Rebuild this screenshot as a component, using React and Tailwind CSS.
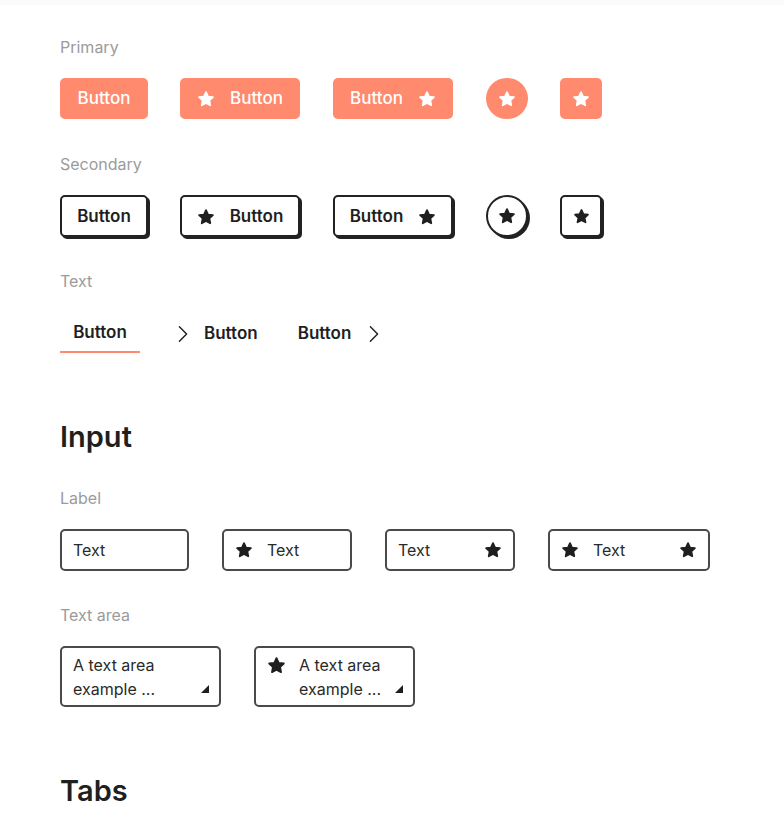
import React from "react";

const Star = ({ className = "" }) => (
  <svg viewBox="0 0 24 24" className={className} fill="currentColor" stroke="currentColor" strokeWidth="2.4" strokeLinejoin="round">
    <path d="M12 2.8l2.75 5.9 6.45.78-4.75 4.43 1.22 6.39L12 17.14l-5.67 3.16 1.22-6.39L2.8 9.48l6.45-.78z" />
  </svg>
);

const Chevron = () => (
  <svg viewBox="0 0 12 20" className="w-[12px] h-[18px]" fill="none" stroke="currentColor" strokeWidth="1.6" strokeLinecap="round" strokeLinejoin="round">
    <path d="M2 2l8 8-8 8" />
  </svg>
);

const Label = ({ children }) => <div className="text-[16px] leading-[20px] text-[#9b9b9b] mb-[21px]">{children}</div>;

const Heading = ({ children }) => <h2 className="text-[29px] leading-[38px] font-semibold text-[#1f1f1f] mb-[32px]">{children}</h2>;

const primary = "h-[41px] pt-px bg-[#ff8a6d] text-white rounded-[5px] flex items-center justify-center gap-[15px] text-[17px] font-medium";
const secondary = "h-[42px] pt-px bg-white text-[#1f1f1f] border-2 border-[#222] rounded-[5px] shadow-[2px_2px_0_#222] flex items-center justify-center gap-[15px] text-[17px] font-semibold";
const input = "h-[42px] border-2 border-[#4a4a4a] rounded-[5px] flex items-center px-[11px] text-[16px] text-[#2a2a2a]";

export default function App() {
  return (
    <div className="min-h-[838px] bg-white border-t-[5px] border-[#fbfbfb] pl-[60px] pt-[32px]" style={{ fontFamily: "Inter, 'Noto Sans', sans-serif" }}>
      <Label>Primary</Label>
      <div className="flex gap-[32px] mb-[35px]">
        <button className={`${primary} w-[88px]`}>Button</button>
        <button className={`${primary} w-[120px]`}><Star className="w-[18px] h-[18px]" />Button</button>
        <button className={`${primary} w-[120px] ml-px`}>Button<Star className="w-[18px] h-[18px]" /></button>
        <button className={`${primary} w-[42px] !pt-0 !rounded-full ml-px`}><Star className="w-[18px] h-[18px]" /></button>
        <button className={`${primary} w-[42px] !pt-0`}><Star className="w-[18px] h-[18px]" /></button>
      </div>

      <Label>Secondary</Label>
      <div className="flex gap-[32px] mb-[34px]">
        <button className={`${secondary} w-[88px]`}>Button</button>
        <button className={`${secondary} w-[120px]`}><Star className="w-[18px] h-[18px]" />Button</button>
        <button className={`${secondary} w-[120px] ml-px`}>Button<Star className="w-[18px] h-[18px]" /></button>
        <button className={`${secondary} w-[42px] !pt-0 !rounded-full ml-px`}><Star className="w-[18px] h-[18px]" /></button>
        <button className={`${secondary} w-[42px] !pt-0`}><Star className="w-[17px] h-[17px]" /></button>
      </div>

      <Label>Text</Label>
      <div className="flex items-center h-[41px] mb-[65px] text-[17px] font-semibold text-[#1f1f1f]">
        <button className="h-full pt-[3px] px-[10px] border-b-2 border-[#ff8a6d] flex items-center w-[80px] justify-center">Button</button>
        <button className="flex items-center gap-[15px] ml-[37px] pt-[2px]"><Chevron />Button</button>
        <button className="flex items-center gap-[17px] ml-[40px] pt-[2px]">Button<Chevron /></button>
      </div>

      <Heading>Input</Heading>
      <Label>Label</Label>
      <div className="flex gap-[33px] mb-[34px]">
        <div className={`${input} w-[129px]`}>Text</div>
        <div className={`${input} w-[130px] gap-[14px]`}><Star className="w-[18px] h-[18px] text-[#1f1f1f]" />Text</div>
        <div className={`${input} w-[130px] justify-between`}>Text<Star className="w-[18px] h-[18px] text-[#1f1f1f]" /></div>
        <div className={`${input} w-[162px] gap-[14px]`}><Star className="w-[18px] h-[18px] text-[#1f1f1f]" /><span className="flex-1">Text</span><Star className="w-[18px] h-[18px] text-[#1f1f1f]" /></div>
      </div>

      <Label>Text area</Label>
      <div className="flex gap-[33px] mb-[65px]">
        <div className="relative w-[161px] h-[61px] border-2 border-[#4a4a4a] rounded-[5px] px-[11px] pt-[5px] text-[16px] leading-[24px] text-[#2a2a2a]">
          <div>A text area</div>
          <div>example ...</div>
          <div className="absolute right-[10px] bottom-[12px] w-0 h-0 border-l-[8px] border-l-transparent border-b-[8px] border-b-[#1f1f1f]" />
        </div>
        <div className="relative w-[161px] h-[61px] border-2 border-[#4a4a4a] rounded-[5px] pl-[11px] pr-[11px] pt-[5px] flex gap-[13px] text-[16px] leading-[24px] text-[#2a2a2a]">
          <Star className="w-[19px] h-[19px] mt-[3px] text-[#1f1f1f] shrink-0" />
          <div>
            <div>A text area</div>
            <div>example ...</div>
          </div>
          <div className="absolute right-[10px] bottom-[12px] w-0 h-0 border-l-[8px] border-l-transparent border-b-[8px] border-b-[#1f1f1f]" />
        </div>
      </div>

      <Heading>Tabs</Heading>
    </div>
  );
}
